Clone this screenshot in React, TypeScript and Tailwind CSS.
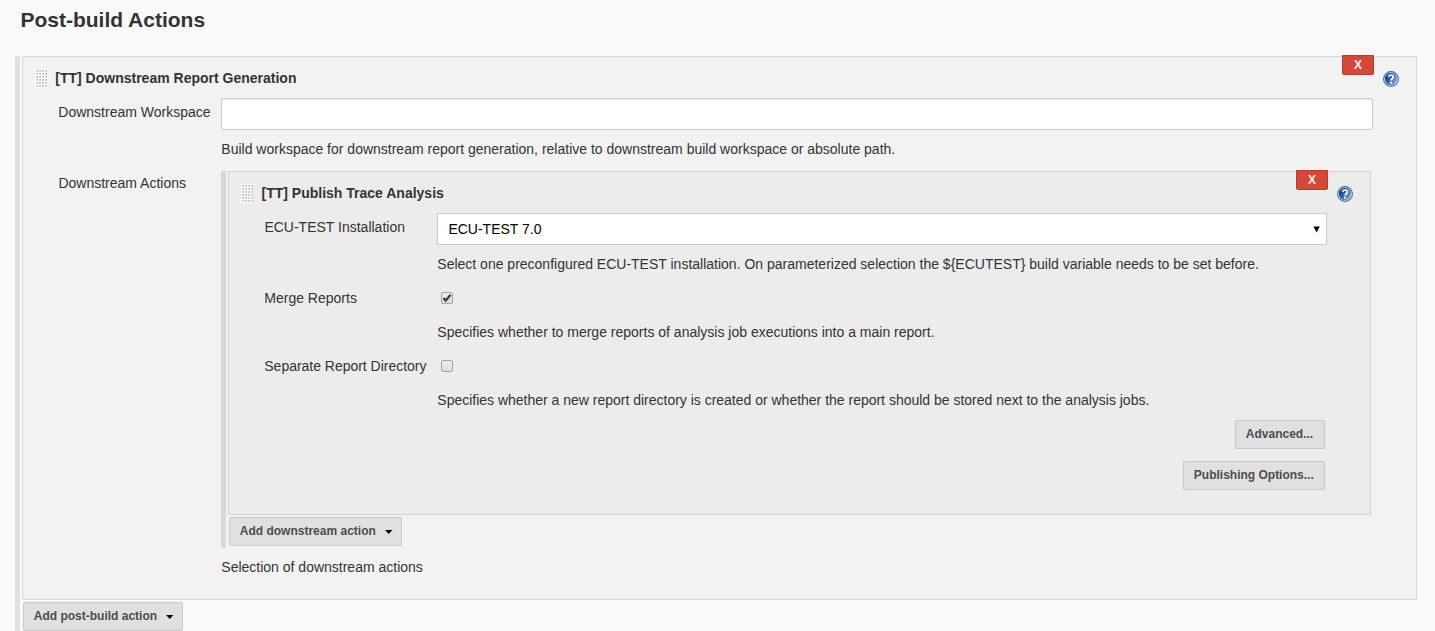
import type { ReactNode } from "react";

function Grip() {
  const dots: ReactNode[] = [];
  for (let r = 0; r < 6; r++)
    for (let c = 0; c < 4; c++)
      dots.push(
        <g key={`${r}-${c}`}>
          <rect x={c * 3 + 1} y={r * 3 + 1} width="2" height="2" fill="#d2d2ce" />
          <rect x={c * 3 + 2} y={r * 3 + 1} width="1" height="1" fill="#bcbcb8" />
        </g>,
      );
  return (
    <svg width="12" height="19" shapeRendering="crispEdges" className="shrink-0">
      <rect width="12" height="19" fill="#fff" />
      {dots}
    </svg>
  );
}

function HelpIcon({ className }: { className: string }) {
  return (
    <svg width="16" height="16" viewBox="0 0 16 16" className={className}>
      <defs>
        <linearGradient id="helpFill" x1="0" y1="0.2" x2="1" y2="0.8">
          <stop offset="0.25" stopColor="#204a87" />
          <stop offset="1" stopColor="#8fb2dc" />
        </linearGradient>
      </defs>
      <circle cx="8" cy="8" r="7.4" fill="#fff" stroke="#3465a4" strokeWidth="1.1" />
      <circle cx="8" cy="8" r="6.2" fill="url(#helpFill)" />
      <path d="M5.7 5.9C5.9 3.3 10.3 3.4 10.2 5.9C10.1 7.6 8.1 7.6 8.1 9.6" fill="none" stroke="#fff" strokeWidth="1.6" />
      <rect x="7.2" y="10.7" width="1.8" height="1.9" fill="#fff" />
    </svg>
  );
}

function DeleteButton({ className }: { className: string }) {
  return (
    <button
      className={`absolute -top-0.5 flex h-5 w-8 items-center justify-center rounded-b-xs border border-[#bd3a2b] bg-[#d24939] text-[12px] font-bold text-[#f0f0f0] ${className}`}
    >
      X
    </button>
  );
}

function Button({ className, menu, children }: { className: string; menu?: boolean; children: ReactNode }) {
  return (
    <button
      className={`flex items-start whitespace-nowrap rounded-xs border border-[#c8c8c8] bg-[#e0e0e0] pl-[9.8px] pt-[5px] text-left text-[12px] leading-4 font-bold text-[#4d4d4d] ${className}`}
    >
      {children}
      {menu && (
        <svg width="8" height="4" viewBox="0 0 8 4" className="mt-[7px] ml-[9px]">
          <path d="M0 0H7.4L3.7 4Z" fill="#000" />
        </svg>
      )}
    </button>
  );
}

function Checkbox({ checked }: { checked?: boolean }) {
  return (
    <svg width="12" height="12" viewBox="0 0 12 12" role="checkbox" aria-checked={!!checked}>
      <defs>
        <linearGradient id="boxFill" x1="0" y1="0" x2="0" y2="1">
          <stop offset="0" stopColor="#eee" />
          <stop offset="1" stopColor="#dcdcdc" />
        </linearGradient>
      </defs>
      <rect x="0.5" y="0.5" width="11" height="11" rx="1.5" fill="url(#boxFill)" stroke="#a5a5a5" />
      {checked && <path d="M2.4 6.2L4.8 8.5L9.6 2.8" fill="none" stroke="#3d3d3d" strokeWidth="2.3" />}
    </svg>
  );
}

export default function App() {
  return (
    <div className="h-[631px] w-[1435px] overflow-hidden bg-[#f9f9f9] font-['Liberation_Sans',Arial,sans-serif] text-[14px] leading-5 text-[#333]">
      <h1 className="h-14 pt-2 pl-[20.4px] text-[21px] leading-6 font-bold">Post-build Actions</h1>
      <div className="ml-[15px] h-[575px] w-[1402px] border-l-5 border-[#e0e0e0] pl-0.5">
        <section className="relative h-[544px] border border-[#d8d8d8] bg-[#f2f2f2]">
          <DeleteButton className="right-[42px]" />
          <HelpIcon className="absolute top-3.5 right-[17px]" />
          <header className="flex h-[41px] items-start gap-[8.3px] pt-3 pl-3">
            <Grip />
            <h2 className="-mt-px font-bold">[TT] Downstream Report Generation</h2>
          </header>
          <div className="flex h-[73px] pl-[35px]">
            <label htmlFor="workspace" className="w-[163px] shrink-0 pt-1 pl-[0.3px]">Downstream Workspace</label>
            <div>
              <input
                id="workspace"
                className="block h-8 w-[1152px] rounded-xs border border-[#ccc] bg-white px-2.5 shadow-[inset_0_1px_1px_rgba(0,0,0,0.075)]"
              />
              <p className="mt-[9px] pl-[0.3px]">Build workspace for downstream report generation, relative to downstream build workspace or absolute path.</p>
            </div>
          </div>
          <div className="flex pl-[35px]">
            <span className="w-[163px] shrink-0 pt-[2px] pl-[0.4px]">Downstream Actions</span>
            <div>
              <div className="h-[377px] w-[1150px] border-l-5 border-[#d8d8d8] pl-0.5">
                <section className="relative h-[344px] border border-[#d3d3d3] bg-[#ececec]">
                  <DeleteButton className="right-[42px]" />
                  <HelpIcon className="absolute top-3.5 right-[17px]" />
                  <header className="flex h-[41px] items-start gap-[8.5px] pt-3 pl-3">
                    <Grip />
                    <h2 className="-mt-px font-bold">[TT] Publish Trace Analysis</h2>
                  </header>
                  <div className="grid grid-cols-[173px_890px] pl-[35px]">
                    <span className="h-[71px] pt-1 pl-[0.4px]">ECU-TEST Installation</span>
                    <div>
                      <div className="flex h-8 items-center justify-between border border-[#ccc] bg-white pr-[6px] pl-[10.4px] text-black">
                        ECU-TEST 7.0
                        <svg width="7" height="7" viewBox="0 0 7 7">
                          <path d="M0.4 0.4H6.8L3.6 6.6Z" fill="#000" />
                        </svg>
                      </div>
                      <p className="mt-[9px] pl-[0.3px]">Select one preconfigured ECU-TEST installation. On parameterized selection the ${"{"}ECUTEST{"}"} build variable needs to be set before.</p>
                    </div>
                    <span className="h-[68px] pt-1 pl-[0.3px]">Merge Reports</span>
                    <div className="pt-2">
                      <div className="pl-1"><Checkbox checked /></div>
                      <p className="mt-[18px] pl-[0.3px]">Specifies whether to merge reports of analysis job executions into a main report.</p>
                    </div>
                    <span className="h-[68px] pt-1 pl-[0.3px] tracking-[-0.02px]">Separate Report Directory</span>
                    <div className="pt-2">
                      <div className="pl-1"><Checkbox /></div>
                      <p className="mt-[18px] pl-[0.3px] tracking-[-0.007px]">Specifies whether a new report directory is created or whether the report should be stored next to the analysis jobs.</p>
                    </div>
                  </div>
                  <div className="flex flex-col items-end gap-3 pr-[45px]">
                    <Button className="h-[29px] w-[90px]">Advanced...</Button>
                    <Button className="h-[29px] w-[142px]">Publishing Options...</Button>
                  </div>
                </section>
                <Button menu className="mt-0.5 ml-px h-[29px] w-[173px]">Add downstream action</Button>
              </div>
              <p className="mt-[9px] pl-[0.3px]">Selection of downstream actions</p>
            </div>
          </div>
        </section>
        <Button menu className="mt-0.5 ml-px h-[29px] w-40">Add post-build action</Button>
      </div>
    </div>
  );
}
